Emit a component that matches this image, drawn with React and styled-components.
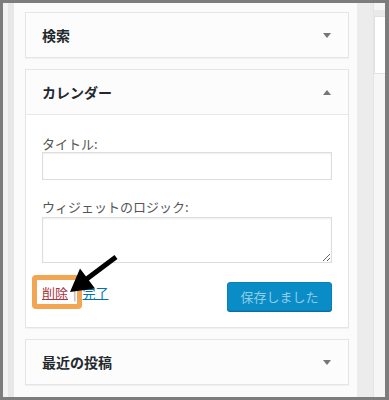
import React from "react";
import styled, { createGlobalStyle } from "styled-components";

const GlobalStyle = createGlobalStyle`
  html, body { margin: 0; padding: 0; background: #fff; }
  body { font-family: "Noto Sans CJK JP", "Noto Sans", sans-serif; }
`;

const Frame = styled.div`
  box-sizing: border-box;
  width: 389px;
  height: 400px;
  border: 3px solid #7d7d7d;
  border-right-width: 4px;
  display: flex;
  background: #fbfbfb;
  overflow: hidden;
`;

const Gutter = styled.div`
  width: 22px;
  flex: none;
  background: linear-gradient(to right, #f3f3f3 0 5px, #e7e7e7 5px 11px, #fbfbfb 11px);
`;

const Main = styled.div`
  width: 324px;
  flex: none;
  padding: 9px 0 10px;
  display: flex;
  flex-direction: column;
  gap: 11px;
`;

const Spacer = styled.div`
  width: 8px;
  flex: none;
`;

const Strip = styled.div`
  width: 16px;
  flex: none;
  background: #ececec;
`;

const Side = styled.div`
  width: 12px;
  flex: none;
  background: #f6f6f6;
  border-left: 1px solid #e4e4e4;
  box-sizing: border-box;
  padding-top: 7px;
`;

const SideTab = styled.div`
  height: 6px;
  background: #e9e9e9;
`;

const SideBox = styled.div`
  height: 56px;
  background: #fff;
  border: 1px solid #e2e2e2;
  border-right: none;
`;

const Card = styled.div`
  background: #fff;
  border: 1px solid #e5e5e5;
  box-shadow: 0 1px 1px rgba(0, 0, 0, 0.04);
`;

const Header = styled.div`
  height: ${(p) => (p.$open ? 45 : 44)}px;
  box-sizing: border-box;
  padding: 0 17px 0 16px;
  display: flex;
  align-items: center;
  justify-content: space-between;
  background: #fcfcfc;
  border-bottom: ${(p) => (p.$open ? "1px solid #e8e8e8" : "none")};
`;

const Title = styled.h3`
  margin: 0;
  font-size: 14px;
  font-weight: 700;
  color: #23282d;
  line-height: 20px;
`;

const Toggle = styled.span`
  width: 0;
  height: 0;
  border-left: 4px solid transparent;
  border-right: 4px solid transparent;
  ${(p) =>
    p.$up ? "border-bottom: 5px solid #72777c;" : "border-top: 5px solid #72777c;"}
`;

const Body = styled.div`
  padding: 20px 16px 16px;
  display: flex;
  flex-direction: column;
`;

const Label = styled.label`
  font-size: 13px;
  line-height: 17px;
  color: #555;
  margin-bottom: ${(p) => p.$gap || 0}px;
`;

const Input = styled.input`
  box-sizing: border-box;
  width: 290px;
  height: 28px;
  border: 1px solid #ddd;
  border-radius: 0;
  box-shadow: inset 0 1px 2px rgba(0, 0, 0, 0.07);
  background: #fff;
  margin: 0 0 18px;
  padding: 3px 5px;
`;

const TextArea = styled.textarea`
  box-sizing: border-box;
  width: 290px;
  height: 46px;
  border: 1px solid #ddd;
  box-shadow: inset 0 1px 2px rgba(0, 0, 0, 0.07);
  background: #fff;
  resize: vertical;
  margin: 0 0 19px;
  padding: 3px 5px;
  display: block;
`;

const Actions = styled.div`
  position: relative;
  height: 29px;
  display: flex;
  align-items: flex-start;
  justify-content: space-between;
`;

const LinkGroup = styled.div`
  margin-top: 2px;
  font-size: 13px;
  line-height: 17px;
  color: #888;
  display: flex;
  align-items: center;
`;

const Link = styled.a`
  position: relative;
  color: ${(p) => (p.$danger ? "#a8343e" : "#0073aa")};
  text-decoration: underline;
  cursor: pointer;
`;

const Sep = styled.span`
  margin: 0 6px 0 5px;
  color: #999;
`;

const Highlight = styled.span`
  position: absolute;
  left: -10px;
  top: -9px;
  width: 50px;
  height: 34px;
  box-sizing: border-box;
  border: 5px solid #f2a552;
  border-radius: 4px;
  pointer-events: none;
`;

const Pointer = styled.svg`
  position: absolute;
  left: 24px;
  top: -29px;
  width: 56px;
  height: 44px;
  overflow: visible;
`;

const SaveButton = styled.button`
  width: 105px;
  height: 29px;
  padding: 0 12px;
  font-family: inherit;
  font-size: 13px;
  color: #8fcde9;
  background: #0a8cc6;
  border: 1px solid #0980b6;
  border-radius: 3px;
  box-shadow: 0 1px 0 #07709f;
  cursor: default;
`;

const Widget = ({ title, children }) => (
  <Card>
    <Header $open={!!children}>
      <Title>{title}</Title>
      <Toggle $up={!!children} />
    </Header>
    {children}
  </Card>
);

export default function App() {
  return (
    <>
      <GlobalStyle />
      <Frame>
        <Gutter />
        <Main>
          <Widget title="検索" />
          <Widget title="カレンダー">
            <Body>
              <Label>タイトル:</Label>
              <Input type="text" />
              <Label $gap={2}>ウィジェットのロジック:</Label>
              <TextArea />
              <Actions>
                <LinkGroup>
                  <Link $danger>
                    削除
                    <Highlight />
                  </Link>
                  <Sep>|</Sep>
                  <Link>完了</Link>
                </LinkGroup>
                <Pointer viewBox="0 0 56 44">
                  <line x1="50" y1="4" x2="20" y2="26.5" stroke="#000" strokeWidth="5" />
                  <polygon points="4,39 14,15.5 29,35.5" fill="#000" />
                </Pointer>
                <SaveButton type="button">保存しました</SaveButton>
              </Actions>
            </Body>
          </Widget>
          <Widget title="最近の投稿" />
        </Main>
        <Spacer />
        <Strip />
        <Side>
          <SideTab />
          <SideBox />
        </Side>
      </Frame>
    </>
  );
}
